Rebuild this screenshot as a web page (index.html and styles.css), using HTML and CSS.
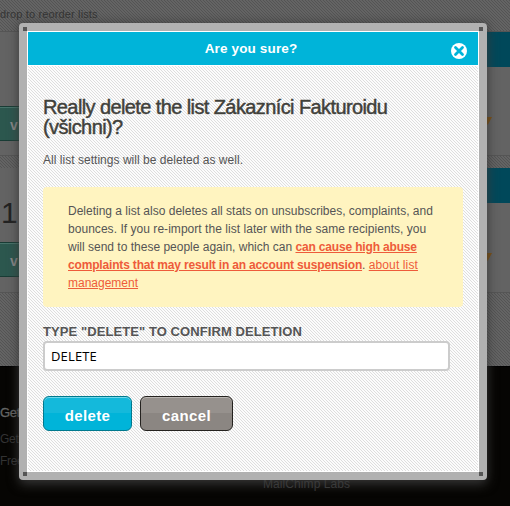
FILE: index.html
```html
<!DOCTYPE html>
<html lang="en">
<head>
<meta charset="utf-8">
<title>Lists</title>
<link rel="stylesheet" href="styles.css">
</head>
<body>
<div class="page">
  <div class="hint hatch"><span>drop to reorder lists</span></div>
  <section class="list">
    <div class="bar"></div>
    <div class="number"></div>
    <svg class="arrow" width="10" height="8"><path d="M0 0H9L5 7.5H4Z" fill="#80500f"/></svg>
    <div class="view">v</div>
  </section>
  <div class="gap hatch"></div>
  <section class="list second">
    <div class="bar"></div>
    <div class="number">1</div>
    <svg class="arrow" width="10" height="8"><path d="M0 0H9L5 7.5H4Z" fill="#80500f"/></svg>
    <div class="view">v</div>
  </section>
  <div class="space hatch"></div>
  <footer class="footer">
    <div class="column"><strong>Get</strong><span>Get</span><span>Free</span></div>
    <div class="labs">MailChimp Labs</div>
  </footer>
</div>
<div class="modal">
  <i class="corner tl"></i><i class="corner tr"></i><i class="corner bl"></i><i class="corner br"></i>
  <div class="dialog">
    <header class="title">
      <span class="t">Are you sure?</span>
      <svg class="close" width="16" height="16" viewBox="0 0 16 16"><circle cx="8" cy="8" r="8" fill="#fff"/><path d="M4.5 4.5 11.5 11.5M11.5 4.5 4.5 11.5" stroke="#00b4d9" stroke-width="2.8" stroke-linecap="round"/></svg>
    </header>
    <main class="content">
      <h1>Really delete the list Zákazníci Fakturoidu<br>(všichni)?</h1>
      <p class="note">All list settings will be deleted as well.</p>
      <div class="warning">
        <div>Deleting a list also deletes all stats on unsubscribes, complaints, and</div>
        <div class="l2">bounces. If you re-import the list later with the same recipients, you</div>
        <div>will send to these people again, which can <a class="b">can cause high abuse</a></div>
        <div><a class="b">complaints that may result in an account suspension</a>. <a class="about">about list</a></div>
        <div><a>management</a></div>
      </div>
      <label for="confirm">TYPE "DELETE" TO CONFIRM DELETION</label>
      <input id="confirm" value="DELETE">
      <div class="actions"><button class="delete">delete</button><button class="cancel">cancel</button></div>
    </main>
  </div>
</div>
</body>
</html>
```
FILE: styles.css
```css
* { box-sizing: border-box; }
body { margin: 0; width: 510px; height: 506px; overflow: hidden; position: relative; background: #060503; font-family: "Liberation Sans", Arial, sans-serif; }
.page { height: 506px; }
.hatch { background: repeating-linear-gradient(45deg, #646464 0 1.414px, #545454 1.414px 2.121px) 0 0 / 3px 3px; }
.hint { height: 32px; border-bottom: 1px solid #555; padding-top: 7px; font-size: 11px; letter-spacing: .14px; line-height: 14px; color: #353535; }
.list { height: 124px; background: #636363; border-bottom: 1px solid #555; position: relative; }
.bar { height: 35px; margin-left: 487px; background: #00485a; }
.number { position: absolute; left: 1px; top: 28px; font-size: 30px; line-height: 34px; color: #222; }
.arrow { position: absolute; left: 483px; top: 85px; }
.view { position: absolute; left: 0; top: 74px; width: 40px; height: 35px; padding-left: 10px; font-size: 14px; font-weight: bold; line-height: 37px; color: #888; background: #2c574e; border: solid #193c35; border-width: 1px 0; box-shadow: inset 0 1px #47736a; }
.gap { height: 12px; }
.list.second { height: 125px; }
.space { height: 73px; }
.footer { height: 140px; background: #060503; border-top: 1px solid #000; position: relative; }
.column { padding-top: 36px; display: flex; flex-direction: column; font-size: 12px; line-height: 22px; color: #333; }
.column strong { font-size: 13px; font-weight: normal; color: #656565; line-height: 20px; margin-bottom: 5px; -webkit-text-stroke: .3px #656565; letter-spacing: -.3px; }
.column span { letter-spacing: -.3px; }
.labs { position: absolute; left: 263px; top: 110px; font-size: 12px; line-height: 14px; letter-spacing: .08px; color: #383838; }
.modal { position: absolute; left: 19px; top: 23px; width: 468px; height: 457px; padding: 8px; background: #b1b1b1; border-radius: 4px; box-shadow: 0 4px 12px rgba(70,70,70,.8), 0 0 9px rgba(0,0,0,.3); }
.corner { position: absolute; width: 4px; height: 4px; background: #555; }
.tl { left: 4px; top: 4px; }
.tr { right: 4px; top: 4px; }
.bl { left: 4px; bottom: 4px; }
.br { right: 4px; bottom: 4px; }
.dialog { height: 441px; border: 1px solid #fff; background: repeating-linear-gradient(45deg, #fcfcfc 0 1.414px, #dedede 1.414px 2.121px) 0 0 / 3px 3px; }
.title { height: 34px; background: #00b4d9; border-bottom: 1px solid #fff; color: #fff; position: relative; }
.t { display: block; text-align: center; font-size: 13.5px; letter-spacing: .15px; line-height: 33px; font-weight: bold; margin-right: 4px; }
.close { position: absolute; right: 11px; top: 11px; }
.content { padding: 31px 15px 0; }
h1 { margin: 0; font-size: 20px; line-height: 20px; font-weight: normal; color: #40403a; -webkit-text-stroke: .45px #40403a; white-space: nowrap; text-shadow: 0 1px #fff; letter-spacing: -.6px; }
.note { margin: 16px 0 0; font-size: 12px; letter-spacing: .03px; line-height: 15px; color: #555; }
.warning { margin: 19px 0 0; width: 420px; height: 120px; padding: 15px 25px; background: #fff4c0; border-radius: 4px; font-size: 12px; line-height: 18px; color: #555; white-space: nowrap; }
.l2 { letter-spacing: .04px; }
a { color: #ee5b3a; text-decoration: underline; }
.b { font-weight: bold; letter-spacing: -.17px; }
.about { letter-spacing: .12px; }
label { display: block; margin-top: 17px; font-size: 13px; letter-spacing: .08px; line-height: 15px; font-weight: bold; color: #555; white-space: nowrap; }
input { display: block; margin: 2px 0 0; width: 407px; height: 30px; padding: 0 6px; border: 2px solid #ccc; border-radius: 4px; background: #fff; font: 13px "Open Sans", sans-serif; letter-spacing: .15px; color: #000; outline: 0; }
.actions { display: flex; gap: 8px; margin-top: 25px; }
button { height: 35px; padding: 4px 0 0; border: 1px solid; border-radius: 6px; font: bold 15px "Liberation Sans", sans-serif; letter-spacing: .35px; color: #fff; }
.delete { width: 89px; border-color: #00798e; background: linear-gradient(#14b9db 0 50%, #00b4d9 50%); box-shadow: inset 0 1px #70d8eb; }
.cancel { width: 93px; border-color: #24221f; background: linear-gradient(#96918d 0 50%, #8b8682 50%); box-shadow: inset 0 1px #bbb7b3; }
```
